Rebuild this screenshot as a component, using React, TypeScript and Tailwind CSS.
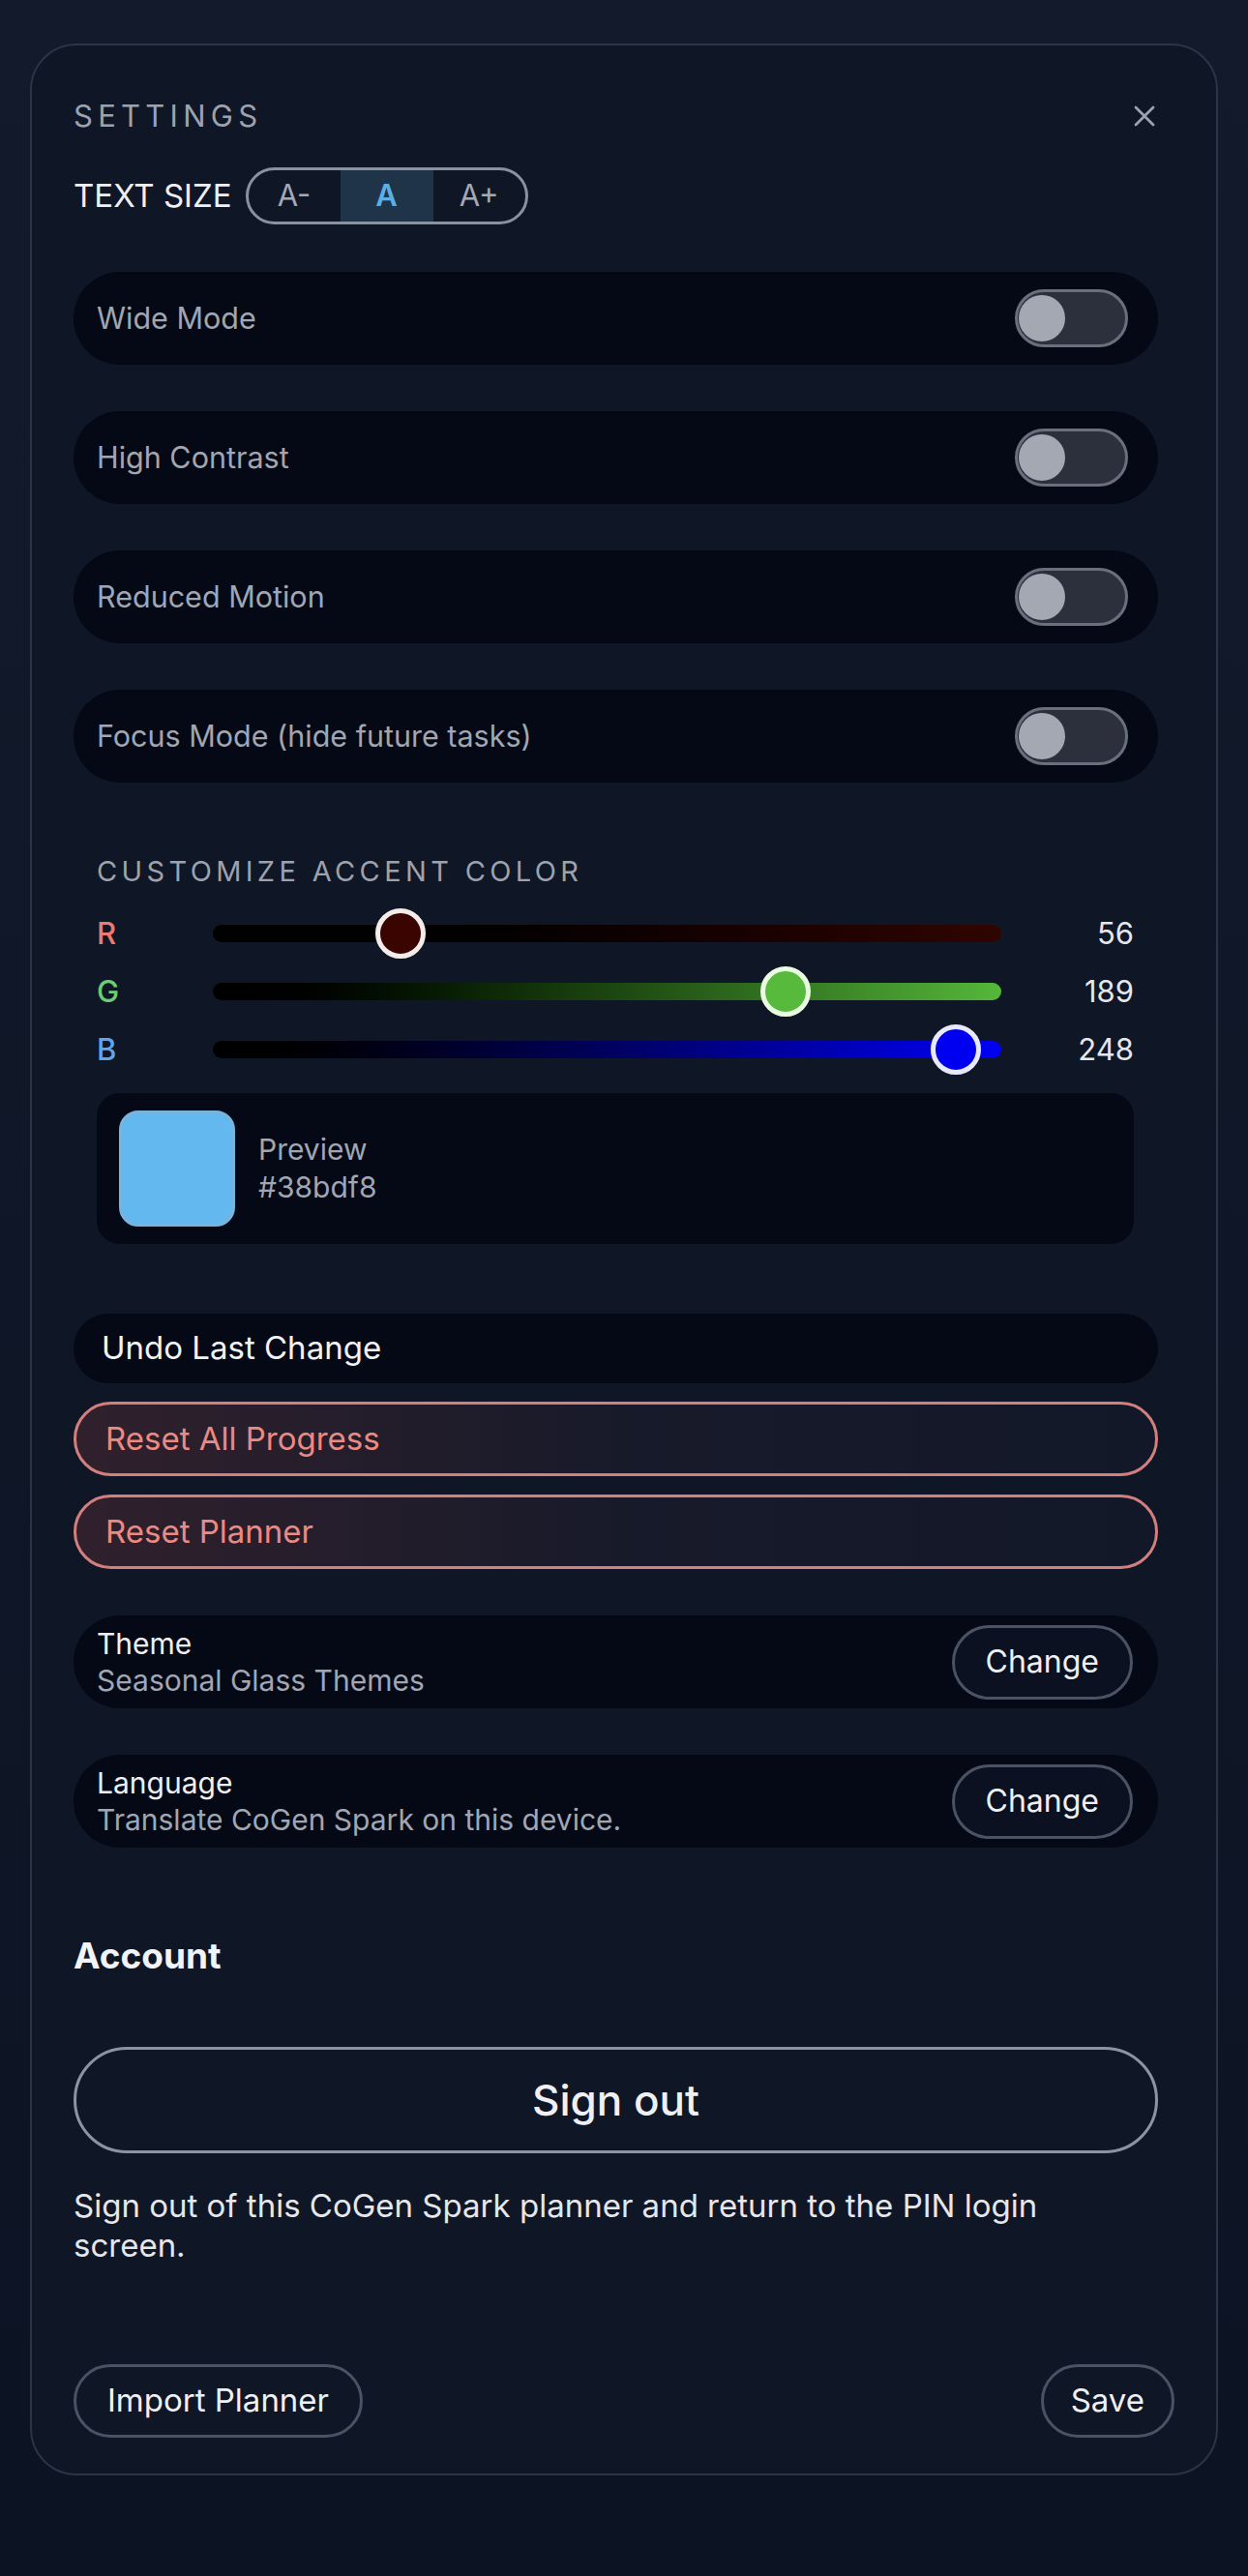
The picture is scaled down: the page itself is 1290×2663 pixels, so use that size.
import React from 'react';

// --- Dados ---
const toggles = ['Wide Mode', 'High Contrast', 'Reduced Motion', 'Focus Mode (hide future tasks)'];

type Channel = {
  key: string;
  value: number;
  labelClass: string;
  trackClass: string;
  thumbClass: string;
};

const channels: Channel[] = [
  {
    key: 'R',
    value: 56,
    labelClass: 'text-[#ef7a70]',
    trackClass: 'bg-gradient-to-r from-[#000000] to-[#300500]',
    thumbClass: 'bg-[#3a0400] border-[#f4ece9]',
  },
  {
    key: 'G',
    value: 189,
    labelClass: 'text-[#6fcb74]',
    trackClass: 'bg-gradient-to-r from-[#000000] to-[#55b83a]',
    thumbClass: 'bg-[#58ba3c] border-[#e9fbe1]',
  },
  {
    key: 'B',
    value: 248,
    labelClass: 'text-[#5fa6ec]',
    trackClass: 'bg-gradient-to-r from-[#000000] to-[#0000f8]',
    thumbClass: 'bg-[#0000f0] border-[#e8e9ff]',
  },
];

const TRACK_W = 815;
const THUMB = 52;

function Toggle() {
  return (
    <div className="w-[117px] h-[60px] rounded-full border-[3px] border-[#686f7e] bg-[#2b303c] flex items-center pl-[1px]">
      <div className="w-[48px] h-[48px] rounded-full bg-[#a3a8b3]" />
    </div>
  );
}

function ToggleRow({ label }: { label: string }) {
  return (
    <div className="h-[96px] rounded-full bg-[#040915] flex items-center justify-between pl-[24px] pr-[31px]">
      <span className="text-[30.5px] text-[#a0a6b2]">{label}</span>
      <Toggle />
    </div>
  );
}

function SliderRow({ ch }: { ch: Channel }) {
  const left = THUMB / 2 + ((TRACK_W - THUMB) * ch.value) / 255;
  return (
    <div className="h-[60px] flex items-center">
      <span className={`w-[120px] text-[31px] font-medium ${ch.labelClass}`}>{ch.key}</span>
      <div className={`relative w-[815px] h-[18px] rounded-full ${ch.trackClass}`}>
        <div
          className={`absolute top-1/2 w-[52px] h-[52px] -translate-x-1/2 -translate-y-1/2 rounded-full border-[5px] ${ch.thumbClass}`}
          style={{ left }}
        />
      </div>
      <span className="flex-1 text-right text-[31px] text-[#e5e7eb]">{ch.value}</span>
    </div>
  );
}

function InfoRow({ title, subtitle }: { title: string; subtitle: string }) {
  return (
    <div className="h-[96px] rounded-full bg-[#040915] flex items-center justify-between pl-[24px] pr-[26px]">
      <div className="flex flex-col">
        <span className="text-[30px] leading-[38px] text-[#eef0f4]">{title}</span>
        <span className="text-[30px] leading-[38px] text-[#a0a6b2]">{subtitle}</span>
      </div>
      <button className="h-[77px] px-[32px] rounded-full border-[3px] border-[#4a5263] bg-[#0b1120] text-[32px] text-[#eef0f4]">
        Change
      </button>
    </div>
  );
}

export default function App() {
  return (
    <div className="min-h-[2663px] bg-gradient-to-b from-[#131a2b] to-[#0c1323] pt-[45px] pl-[31px] font-['Inter',_sans-serif]">
      <div className="w-[1228px] rounded-[48px] border-2 border-[#2c3445] bg-[#0f1626] px-[43px] pt-[53px] pb-[37px]">
        {/* cabeçalho */}
        <div className="h-[40px] flex items-center justify-between">
          <span className="text-[31px] tracking-[0.17em] text-[#9ca3af]">SETTINGS</span>
          <button className="w-[40px] h-[40px] mr-[11px] flex items-center justify-center">
            <svg width="24" height="24" viewBox="0 0 24 24" fill="none" stroke="#9ca3af" strokeWidth="2.8" strokeLinecap="round">
              <path d="M3 3 L21 21 M21 3 L3 21" />
            </svg>
          </button>
        </div>

        {/* tamanho do texto */}
        <div className="mt-[33px] flex items-center gap-[14px]">
          <span className="text-[33px] text-[#eef0f4]">TEXT SIZE</span>
          <div className="h-[59px] rounded-full border-[3px] border-[#8a92a1] flex overflow-hidden">
            <button className="w-[95px] text-[31px] text-[#a3a9b5]">A-</button>
            <button className="w-[96px] bg-[#1f3349] text-[31px] font-semibold text-[#5eaee6]">A</button>
            <button className="w-[95px] text-[31px] text-[#a3a9b5]">A+</button>
          </div>
        </div>

        <div className="w-[1121px]">
          <div className="mt-[49px] flex flex-col gap-[48px]">
            {toggles.map((t) => (
              <ToggleRow key={t} label={t} />
            ))}
          </div>

          {/* cor de destaque */}
          <div className="mt-[72px] pl-[24px] pr-[25px]">
            <div className="h-[40px] flex items-center text-[29px] tracking-[0.15em] text-[#9ca3af]">
              CUSTOMIZE ACCENT COLOR
            </div>
            <div className="mt-[14px]">
              {channels.map((ch) => (
                <SliderRow key={ch.key} ch={ch} />
              ))}
            </div>
            <div className="mt-[15px] h-[156px] rounded-[24px] bg-[#040915] flex items-center pl-[23px] gap-[24px]">
              <div className="w-[120px] h-[120px] rounded-[20px] bg-[#63b9ef] border-[3px] border-[#78b4dc]" />
              <div className="flex flex-col">
                <span className="text-[30px] leading-[39px] text-[#a0a6b2]">Preview</span>
                <span className="text-[30px] leading-[39px] text-[#a0a6b2]">#38bdf8</span>
              </div>
            </div>
          </div>

          {/* ações */}
          <button className="mt-[72px] w-full h-[72px] rounded-full bg-[#040915] pl-[29px] text-left text-[33px] text-[#f1f3f7]">
            Undo Last Change
          </button>
          <div className="mt-[19px] flex flex-col gap-[19px]">
            <button className="w-full h-[77px] rounded-full border-[3px] border-[#d37f7d] bg-gradient-to-r from-[#30202c] via-[#181a2a] to-[#121828] pl-[30px] text-left text-[33px] text-[#ea8a84]">
              Reset All Progress
            </button>
            <button className="w-full h-[77px] rounded-full border-[3px] border-[#d37f7d] bg-gradient-to-r from-[#30202c] via-[#181a2a] to-[#121828] pl-[30px] text-left text-[33px] text-[#ea8a84]">
              Reset Planner
            </button>
          </div>

          <div className="mt-[48px] flex flex-col gap-[48px]">
            <InfoRow title="Theme" subtitle="Seasonal Glass Themes" />
            <InfoRow title="Language" subtitle="Translate CoGen Spark on this device." />
          </div>

          {/* conta */}
          <div className="mt-[90px] h-[44px] flex items-center text-[37px] font-bold text-[#f1f3f7]">Account</div>
          <button className="mt-[72px] w-full h-[110px] rounded-full border-[3px] border-[#8c94a4] text-[44px] font-medium text-[#eef0f4]">
            Sign out
          </button>
          <p className="mt-[34px] max-w-[1060px] text-[33px] leading-[41px] text-[#e5e7eb]">
            Sign out of this CoGen Spark planner and return to the PIN login screen.
          </p>
        </div>

        {/* rodapé */}
        <div className="mt-[102px] flex items-center justify-between">
          <button className="h-[76px] px-[32px] rounded-full border-[3px] border-[#4a5263] text-[33px] text-[#eef0f4]">
            Import Planner
          </button>
          <button className="h-[76px] px-[28px] rounded-full border-[3px] border-[#4a5263] text-[33px] text-[#eef0f4]">
            Save
          </button>
        </div>
      </div>
    </div>
  );
}
